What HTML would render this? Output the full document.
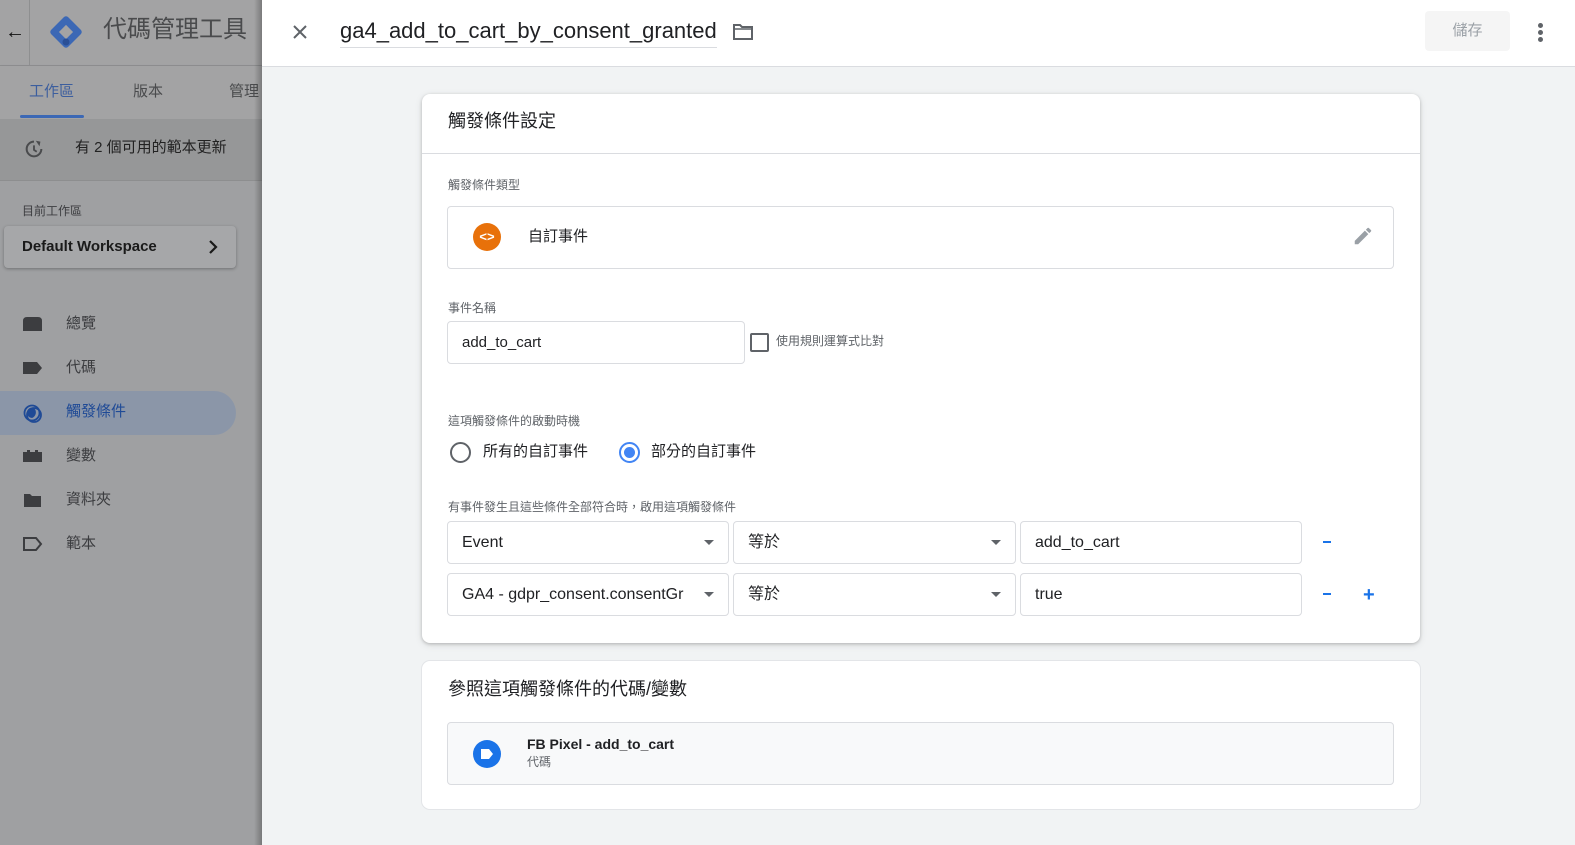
<!DOCTYPE html>
<html><head><meta charset="utf-8"><style>
*{box-sizing:border-box;margin:0;padding:0}
body{width:1575px;height:845px;overflow:hidden;font-family:"Liberation Sans","Noto Sans CJK TC",sans-serif;background:#f1f3f4;position:relative;color:#202124}
.side{position:absolute;left:0;top:0;width:262px;height:845px;background:#9fa0a2;overflow:hidden}
.side .hdr{height:66px;background:#a3a3a4;border-bottom:1px solid #8e8f90;position:relative}
.side .tabs{height:53px;background:#a3a3a4;position:relative;box-shadow:0 2px 3px rgba(0,0,0,.25)}
.side .banner{height:62px;background:#969798;position:relative;border-bottom:1px solid #8d8e8f}
.abs{position:absolute;white-space:nowrap;line-height:1.2}
.nav{position:absolute;left:0;width:236px;height:44px}
.nav span{position:absolute;left:66px;top:12px;font-size:15px;color:#3c3d40;line-height:1.2}
.nav svg{position:absolute;left:22px;top:13px}
.main{position:absolute;left:262px;top:0;right:0;bottom:0}
.top{height:67px;background:#fff;border-bottom:1px solid #dadce0;position:relative}
.card{position:absolute;background:#fff;border-radius:8px;box-shadow:0 1px 3px rgba(0,0,0,.2),0 2px 8px rgba(0,0,0,.1)}
.lbl{position:absolute;font-size:12px;color:#5f6368;line-height:1.2}
.box{position:absolute;border:1px solid #dadce0;border-radius:4px;background:#fff}
.box span{position:absolute;left:14px;top:11px;font-size:16px;color:#202124;line-height:20px}
.arr{position:absolute;right:14px;top:18px;width:0;height:0;border-left:5px solid transparent;border-right:5px solid transparent;border-top:5px solid #5f6368}
.minus{position:absolute;width:8px;height:2px;background:#1a73e8}
</style></head><body>
<div class="side">
 <div class="hdr">
  <div class="abs" style="left:5px;top:20px;font-size:20px;color:#111">&#8592;</div>
  <div class="abs" style="left:29px;top:0;width:1px;height:66px;background:#8e8f90"></div>
  <svg class="abs" style="left:49px;top:15px" width="34" height="34" viewBox="0 0 34 34"><rect x="5" y="5" width="24" height="24" rx="3" transform="rotate(45 17 17)" fill="#3c68b5"/><rect x="12" y="12" width="10" height="10" transform="rotate(45 17 17)" fill="#a3a3a4"/><circle cx="17" cy="27" r="3.5" fill="#2a4f96"/></svg>
  <div class="abs" style="left:103px;top:16px;font-size:24px;color:#4a4b4d">代碼管理工具</div>
 </div>
 <div class="tabs">
  <div class="abs" style="left:29px;top:17px;font-size:15px;color:#3c5e9e">工作區</div>
  <div class="abs" style="left:20px;top:49px;width:64px;height:3px;background:#3c68b5;border-radius:2px"></div>
  <div class="abs" style="left:133px;top:17px;font-size:15px;color:#4a4b4d">版本</div>
  <div class="abs" style="left:229px;top:17px;font-size:15px;color:#4a4b4d">管理</div>
 </div>
 <div class="banner">
  <svg class="abs" style="left:23px;top:19px" width="22" height="22" viewBox="0 0 24 24"><path d="M12 4a8 8 0 1 0 8 8" fill="none" stroke="#4a4b4d" stroke-width="2.2"/><path d="M14 3l5 1-1 5z" fill="#4a4b4d"/><path d="M12 8v5l3 2" fill="none" stroke="#4a4b4d" stroke-width="2"/></svg>
  <div class="abs" style="left:75px;top:20px;font-size:15px;color:#222">有 2 個可用的範本更新</div>
 </div>
 <div class="abs" style="left:22px;top:204px;font-size:12px;color:#3c3d40">目前工作區</div>
 <div class="abs" style="left:4px;top:226px;width:232px;height:42px;background:#a6a7a9;border-radius:4px;box-shadow:0 1px 3px rgba(0,0,0,.3)">
  <div class="abs" style="left:18px;top:12px;font-size:15px;font-weight:bold;color:#1a1a1a">Default Workspace</div>
  <svg class="abs" style="left:204px;top:14px" width="10" height="14"><path d="M2 1L8 7L2 13" fill="none" stroke="#1a1a1a" stroke-width="2.2"/></svg>
 </div>
 <div class="nav" style="top:303px"><svg width="21" height="16"><path d="M1 5 Q1 1 5 1 H16 Q20 1 20 5 V15 H1Z" fill="#3c3d40"/></svg><span>總覽</span></div>
 <div class="nav" style="top:347px"><svg width="21" height="16"><path d="M1 2 H15 L20 8 L15 14 H1Z" fill="#3c3d40"/></svg><span>代碼</span></div>
 <div class="nav" style="top:391px;background:#8b96a8;border-radius:0 22px 22px 0"><svg width="22" height="20" viewBox="0 0 22 20"><circle cx="10" cy="9" r="7.5" fill="none" stroke="#1f4a96" stroke-width="1.8"/><circle cx="12" cy="11" r="7" fill="none" stroke="#1f4a96" stroke-width="1.8"/><path d="M5 9a5 5 0 0 1 7-5 6 6 0 0 1-2 10 5 5 0 0 1-5-5z" fill="#1f4a96"/></svg><span style="color:#1f4a96">觸發條件</span></div>
 <div class="nav" style="top:435px"><svg width="21" height="16"><path d="M1 4 H5 V2 H8 V4 H13 V2 H16 V4 H20 V14 H1Z" fill="#3c3d40"/></svg><span>變數</span></div>
 <div class="nav" style="top:479px"><svg width="21" height="16"><path d="M2 2 H8 L10 4 H19 V15 H2Z" fill="#3c3d40"/></svg><span>資料夾</span></div>
 <div class="nav" style="top:523px"><svg width="21" height="16"><path d="M2 2 H14 L19 8 L14 14 H2Z" fill="none" stroke="#3c3d40" stroke-width="2"/></svg><span>範本</span></div>
 <div class="abs" style="right:0;top:0;width:8px;height:845px;background:linear-gradient(to right,rgba(0,0,0,0),rgba(0,0,0,.25))"></div>
</div>
<div class="main">
 <div class="top">
  <svg class="abs" style="left:29px;top:23px" width="18" height="18"><path d="M3 3L15 15M15 3L3 15" stroke="#5f6368" stroke-width="2"/></svg>
  <div class="abs" style="left:78px;top:18px;font-size:22px;color:#202124;padding-bottom:3px;border-bottom:1px solid #dadce0">ga4_add_to_cart_by_consent_granted</div>
  <svg class="abs" style="left:470px;top:22px" width="22" height="20" viewBox="0 0 22 20"><path d="M2 3H8L10 5H20V17H2Z" fill="none" stroke="#5f6368" stroke-width="2"/><path d="M2 7H20" stroke="#5f6368" stroke-width="1.5"/></svg>
  <div class="abs" style="left:1163px;top:11px;width:85px;height:40px;background:#f5f5f5;border-radius:4px;font-size:15px;color:#9aa0a6;text-align:center;line-height:40px">儲存</div>
  <div class="abs" style="left:1276px;top:23px;width:5px;height:5px;border-radius:50%;background:#5f6368;box-shadow:0 7px 0 #5f6368,0 14px 0 #5f6368"></div>
 </div>
 <div class="card" style="left:160px;top:94px;width:998px;height:549px">
  <div class="abs" style="left:26px;top:17px;font-size:18px;color:#202124">觸發條件設定</div>
  <div class="abs" style="left:0;top:59px;width:100%;height:1px;background:#dadce0"></div>
  <div class="lbl" style="left:26px;top:84px">觸發條件類型</div>
  <div class="box" style="left:25px;top:112px;width:947px;height:63px">
   <div class="abs" style="left:25px;top:16px;width:28px;height:28px;border-radius:50%;background:#e8710a;color:#fff;font-size:13px;font-weight:bold;text-align:center;line-height:27px">&lt;&gt;</div>
   <div class="abs" style="left:80px;top:21px;font-size:15px">自訂事件</div>
   <svg class="abs" style="left:904px;top:18px" width="22" height="22" viewBox="0 0 24 24"><path d="M3 17.25V21h3.75L17.81 9.94l-3.75-3.75L3 17.25zM20.71 7.04a1 1 0 0 0 0-1.41l-2.34-2.34a1 1 0 0 0-1.41 0l-1.83 1.83 3.75 3.75 1.83-1.83z" fill="#9aa0a6"/></svg>
  </div>
  <div class="lbl" style="left:26px;top:207px">事件名稱</div>
  <div class="box" style="left:25px;top:227px;width:298px;height:43px"><span style="font-size:15px">add_to_cart</span></div>
  <div class="abs" style="left:328px;top:239px;width:19px;height:19px;border:2px solid #5f6368;border-radius:2px"></div>
  <div class="abs" style="left:354px;top:240px;font-size:12px;color:#5f6368">使用規則運算式比對</div>
  <div class="lbl" style="left:26px;top:320px">這項觸發條件的啟動時機</div>
  <div class="abs" style="left:28px;top:348px;width:21px;height:21px;border:2px solid #5f6368;border-radius:50%"></div>
  <div class="abs" style="left:61px;top:349px;font-size:15px">所有的自訂事件</div>
  <div class="abs" style="left:197px;top:348px;width:21px;height:21px;border:2px solid #4285f4;border-radius:50%"><div style="margin:3px;width:11px;height:11px;border-radius:50%;background:#4285f4"></div></div>
  <div class="abs" style="left:229px;top:349px;font-size:15px">部分的自訂事件</div>
  <div class="lbl" style="left:26px;top:406px">有事件發生且這些條件全部符合時，啟用這項觸發條件</div>
  <div class="box" style="left:25px;top:427px;width:282px;height:43px"><span>Event</span><div class="arr"></div></div>
  <div class="box" style="left:311px;top:427px;width:283px;height:43px"><span>等於</span><div class="arr"></div></div>
  <div class="box" style="left:598px;top:427px;width:282px;height:43px"><span>add_to_cart</span></div>
  <div class="minus" style="left:901px;top:447px"></div>
  <div class="box" style="left:25px;top:479px;width:282px;height:43px"><span>GA4 - gdpr_consent.consentGr</span><div class="arr"></div></div>
  <div class="box" style="left:311px;top:479px;width:283px;height:43px"><span>等於</span><div class="arr"></div></div>
  <div class="box" style="left:598px;top:479px;width:282px;height:43px"><span>true</span></div>
  <div class="minus" style="left:901px;top:499px"></div>
  <div class="abs" style="left:941px;top:489px;font-size:20px;font-weight:bold;color:#1a73e8">+</div>
 </div>
 <div class="card" style="left:160px;top:661px;width:998px;height:148px;box-shadow:0 0 0 1px #e3e5e8">
  <div class="abs" style="left:26px;top:18px;font-size:18px;color:#202124">參照這項觸發條件的代碼/變數</div>
  <div class="abs" style="left:25px;top:61px;width:947px;height:63px;background:#f8f9fa;border:1px solid #dadce0;border-radius:4px">
   <div class="abs" style="left:25px;top:17px;width:28px;height:28px;border-radius:50%;background:#1a73e8"><svg style="position:absolute;left:8px;top:9px" width="13" height="10"><path d="M0 0H8L12 5L8 10H0Z" fill="#fff"/></svg></div>
   <div class="abs" style="left:79px;top:13px;font-size:14px;font-weight:bold">FB Pixel - add_to_cart</div>
   <div class="abs" style="left:79px;top:32px;font-size:12px;color:#5f6368">代碼</div>
  </div>
 </div>
</div>
</body></html>
